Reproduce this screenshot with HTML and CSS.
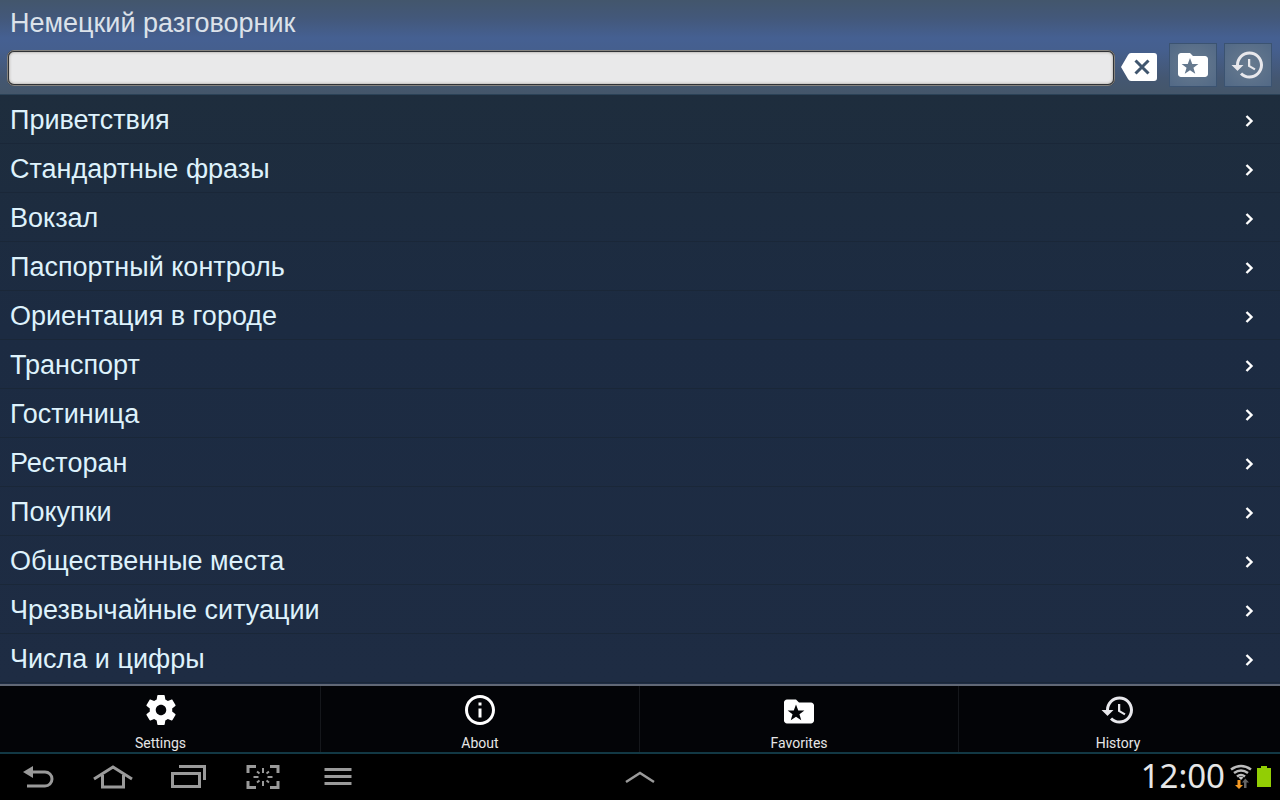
FILE: index.html
```html
<!DOCTYPE html>
<html lang="ru">
<head>
<meta charset="utf-8">
<title>Немецкий разговорник</title>
<link rel="stylesheet" href="styles.css">
</head>
<body>
<svg class="defs" aria-hidden="true">
  <symbol id="history" viewBox="0 0 24 24"><path d="M13 3c-4.970 0-9 4.030-9 9H1l3.890 3.890.07.14L9 12H6c0-3.870 3.130-7 7-7s7 3.130 7 7-3.130 7-7 7c-1.930 0-3.680-.79-4.940-2.060l-1.420 1.420C8.270 19.990 10.510 21 13 21c4.970 0 9-4.030 9-9s-4.030-9-9-9zm-1 5v5l4.280 2.540.72-1.210-3.500-2.080V8H12z"/></symbol>
  <symbol id="folder" viewBox="0 0 24 24"><path fill-rule="evenodd" d="M10 4H4c-1.100 0-2 .9-2 2v12c0 1.100.9 2 2 2h16c1.100 0 2-.9 2-2V8c0-1.100-.9-2-2-2h-8l-2-2zM10 7.300l1.500 4h4.100l-3.300 2.500 1.200 4.100-3.500-2.400-3.500 2.400 1.200-4.100-3.300-2.500h4.100z"/></symbol>
  <symbol id="chevron" viewBox="0 0 12 14"><path d="M3.500 2l5 5-5 5" fill="none" stroke="currentColor" stroke-width="2.400"/></symbol>
</svg>
<div class="app">
  <header class="header">
    <h1 class="title">Немецкий разговорник</h1>
    <form class="tools">
      <input class="search" type="text" aria-label="Поиск">
      <button class="clear" type="reset" aria-label="Очистить">
        <svg width="36" height="28" viewBox="0 0 36 28"><path fill="#fff" d="M10 0h23q3 0 3 3v22q0 3-3 3H10q-2 0-3-2L0 14 7 2q1-2 3-2z"/><path d="M14.500 7.500l13 13M27.500 7.500l-13 13" stroke="#40566e" stroke-width="3"/></svg>
      </button>
      <button class="tool" type="button" aria-label="Избранное"><svg class="icon"><use href="#folder"/></svg></button>
      <button class="tool" type="button" aria-label="История"><svg class="icon soft"><use href="#history"/></svg></button>
    </form>
  </header>
  <main class="content">
    <ul class="list">
      <li><button class="row">Приветствия<svg class="chevron"><use href="#chevron"/></svg></button></li>
      <li><button class="row">Стандартные фразы<svg class="chevron"><use href="#chevron"/></svg></button></li>
      <li><button class="row">Вокзал<svg class="chevron"><use href="#chevron"/></svg></button></li>
      <li><button class="row">Паспортный контроль<svg class="chevron"><use href="#chevron"/></svg></button></li>
      <li><button class="row">Ориентация в городе<svg class="chevron"><use href="#chevron"/></svg></button></li>
      <li><button class="row">Транспорт<svg class="chevron"><use href="#chevron"/></svg></button></li>
      <li><button class="row">Гостиница<svg class="chevron"><use href="#chevron"/></svg></button></li>
      <li><button class="row">Ресторан<svg class="chevron"><use href="#chevron"/></svg></button></li>
      <li><button class="row">Покупки<svg class="chevron"><use href="#chevron"/></svg></button></li>
      <li><button class="row">Общественные места<svg class="chevron"><use href="#chevron"/></svg></button></li>
      <li><button class="row">Чрезвычайные ситуации<svg class="chevron"><use href="#chevron"/></svg></button></li>
      <li><button class="row">Числа и цифры<svg class="chevron"><use href="#chevron"/></svg></button></li>
    </ul>
  </main>
  <nav class="menu">
    <button class="item"><svg class="icon" viewBox="0 0 24 24"><path d="M19.430 12.980c.04-.32.070-.64.070-.98s-.03-.66-.07-.98l2.110-1.650c.19-.15.240-.42.120-.64l-2-3.460c-.12-.22-.39-.3-.61-.22l-2.490 1c-.52-.4-1.080-.73-1.690-.98l-.38-2.650C14.460 2.180 14.250 2 14 2h-4c-.25 0-.46.180-.49.420l-.38 2.650c-.61.250-1.170.590-1.690.98l-2.490-1c-.23-.09-.49 0-.61.220l-2 3.460c-.13.220-.07.490.120.640l2.110 1.650c-.04.320-.07.650-.07.980s.03.660.070.98l-2.110 1.650c-.19.150-.24.420-.12.640l2 3.460c.12.220.390.300.610.220l2.490-1c.52.400 1.080.730 1.690.98l.38 2.650c.03.240.240.420.490.420h4c.25 0 .46-.18.490-.42l.38-2.650c.61-.25 1.170-.59 1.690-.98l2.490 1c.23.090.490 0 .61-.22l2-3.460c.12-.22.070-.49-.12-.64l-2.110-1.650zM12 15.500c-1.930 0-3.500-1.570-3.500-3.500s1.570-3.500 3.500-3.500 3.500 1.570 3.500 3.500-1.570 3.500-3.500 3.500z"/></svg>Settings</button>
    <button class="item"><svg class="icon" viewBox="0 0 24 24"><path d="M11 17h2v-6h-2v6zm1-15C6.480 2 2 6.480 2 12s4.480 10 10 10 10-4.480 10-10S17.520 2 12 2zm0 18c-4.410 0-8-3.590-8-8s3.590-8 8-8 8 3.590 8 8-3.590 8-8 8zM11 9h2V7h-2v2z"/></svg>About</button>
    <button class="item"><svg class="icon" viewBox="0 -1 24 24"><use href="#folder" width="24" height="24"/></svg>Favorites</button>
    <button class="item"><svg class="icon soft"><use href="#history"/></svg>History</button>
  </nav>
  <footer class="system">
    <div class="keys">
      <button class="key" aria-label="Back"><svg width="36" height="28" viewBox="0 0 36 28"><path d="M9 9h16a7 7 0 0 1 0 14H7" fill="none" stroke="currentColor" stroke-width="3"/><path fill="currentColor" d="M3 9l10-6v12z"/></svg></button>
      <button class="key" aria-label="Home"><svg width="40" height="28" viewBox="0 0 40 28"><path d="M1 16L20 4l19 12M9.500 12v12h21V12" fill="none" stroke="currentColor" stroke-width="3"/></svg></button>
      <button class="key" aria-label="Recent apps"><svg width="36" height="28" viewBox="0 0 36 28"><path d="M2.500 10.500h27v13h-27zM9 3.500h25.500V17" fill="none" stroke="currentColor" stroke-width="3"/></svg></button>
      <button class="key" aria-label="Screenshot"><svg width="36" height="28" viewBox="0 0 36 28"><path d="M3 10V3.500h8M25 3.500h8V10M33 18v6.500h-8M11 24.500H3V18" fill="none" stroke="currentColor" stroke-width="3"/><path d="M18 5v5M18 18v5M8.500 14h5M22.500 14h5M12 8.500l2.500 2M24 8.500l-2.500 2M12 19.500l2.500-2M24 19.500l-2.500-2" stroke="currentColor" stroke-width="2"/></svg></button>
      <button class="key" aria-label="Menu"><svg width="36" height="28" viewBox="0 0 36 28"><path d="M4.500 6.500h27M4.500 13.500h27M4.500 20.500h27" stroke="currentColor" stroke-width="3"/></svg></button>
    </div>
    <button class="key" aria-label="Expand"><svg width="32" height="16" viewBox="0 0 32 16"><path d="M2 13l14-9 14 9" fill="none" stroke="currentColor" stroke-width="2.500"/></svg></button>
    <div class="status">
      <time class="clock">12:00</time>
      <svg width="22" height="26" viewBox="0 0 22 26" aria-label="Wi-Fi"><g fill="none" stroke="#bcbcbc" stroke-width="2.600"><path d="M1 5.500q10-7 20 0M4 9q7-5 14 0M7 12.500q4-3 8 0"/></g><path fill="#ccc" d="M8.500 13.500q2.500-1.500 5 0L11 16z"/><path fill="#f59a23" d="M7.500 16h3v5H13l-4 4-4-4h2.500z"/><path fill="#666" d="M14 24h2.500v-5.500H19L15.300 14.500 12 18.500h2z"/></svg>
      <svg width="14" height="22" viewBox="0 0 14 22" aria-label="Battery"><path fill="#92ce04" d="M4 0h6v2h4v19H0V2h4z"/></svg>
    </div>
  </footer>
</div>
</body>
</html>
```
FILE: styles.css
```css
* { box-sizing: border-box; }

body {
  margin: 0;
  background: #000;
  font-family: "Liberation Sans", Arial, sans-serif;
}

button {
  margin: 0;
  padding: 0;
  border: 0;
  background: none;
  color: inherit;
  font: inherit;
}

svg { display: block; flex: none; }

.defs { position: absolute; width: 0; height: 0; }

.app {
  display: flex;
  flex-direction: column;
  min-height: 100vh;
}

.header {
  padding-bottom: 7px;
  border-bottom: 1px solid #2b4257;
  background: linear-gradient(#43566c 0, #43587a 18px, #456092 38px, #455f8e 50px, #445772 78px, #44566a 100%);
}

.title {
  margin: 0;
  padding: 3px 10px 0;
  color: #dce2ea;
  font-size: 27px;
  font-weight: 400;
  line-height: 40px;
}

.tools {
  display: flex;
  align-items: center;
  padding: 0 8px 0 7px;
}

.search {
  flex: 1;
  min-width: 0;
  height: 36px;
  margin-top: 5px;
  padding: 0 10px;
  border: 2px solid #303236;
  border-radius: 7px;
  outline: 1px solid #85837f;
  outline-offset: -1px;
  background: #e9e9ea;
  box-shadow: inset 0 0 3px #99958e;
  font-size: 24px;
}

.clear { margin: 4px 12px 0 6px; }

.tool {
  display: flex;
  align-items: center;
  justify-content: center;
  width: 48px;
  height: 44px;
  border: 1px solid #3b5371;
  background: radial-gradient(#687b8f, #526986);
}

.tool + .tool { margin-left: 7px; }

.icon { width: 36px; height: 36px; fill: #fff; }

.soft { fill: #e8e8ec; }

.content {
  flex: 1;
  background: linear-gradient(#1e2d3d, #1c2b42 40%, #1e2c43);
}

.list { margin: 0; padding: 0; list-style: none; }

.row {
  display: flex;
  align-items: center;
  justify-content: space-between;
  width: 100%;
  height: 49px;
  padding: 2px 25px 0 10px;
  border-bottom: 1px solid #1a2738;
  color: #def2fc;
  font-size: 27px;
  line-height: 32px;
  text-align: left;
}

.chevron { width: 12px; height: 14px; margin-top: 2px; color: #fff; }

.menu {
  display: grid;
  grid-template-columns: repeat(4, 1fr);
  padding: 0 3px 0 1px;
  border-top: 2px solid #616876;
  border-bottom: 2px solid #123844;
  background: #030407;
}

.item {
  display: flex;
  flex-direction: column;
  align-items: center;
  gap: 6px;
  padding: 6px 0 0;
  color: #e6e6e6;
  font-family: Roboto, sans-serif;
  font-size: 14px;
  line-height: 18px;
}

.item + .item { border-left: 1px solid #15171b; }

.system {
  display: grid;
  grid-template-columns: 1fr auto 1fr;
  align-items: center;
  height: 46px;
}

.keys { display: flex; }

.key { color: #9a9a9a; }

.keys .key {
  display: flex;
  justify-content: center;
  width: 75px;
}

.status {
  display: flex;
  align-items: center;
  justify-content: flex-end;
  gap: 5px;
  padding-right: 9px;
}

.clock {
  color: #e6e6e6;
  font-family: "Noto Sans", sans-serif;
  font-size: 33px;
  line-height: 42px;
  padding-bottom: 2px;
}
```
